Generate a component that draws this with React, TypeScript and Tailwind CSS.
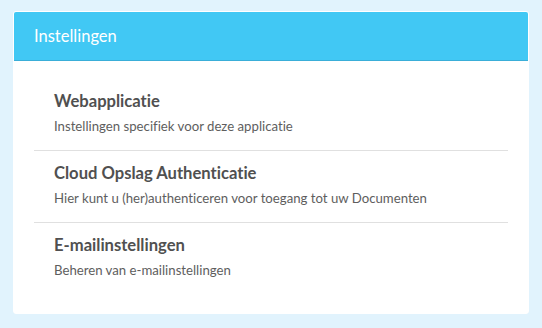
const items = [
  { title: 'Webapplicatie', desc: 'Instellingen specifiek voor deze applicatie' },
  { title: 'Cloud Opslag Authenticatie', desc: 'Hier kunt u (her)authenticeren voor toegang tot uw Documenten' },
  { title: 'E-mailinstellingen', desc: 'Beheren van e-mailinstellingen' },
];

export default function App() {
  return (
    <div className="w-[542px] h-[328px] bg-[#e1f3fd] pt-[11px] pl-[13px] font-['Lato',sans-serif] [font-variant-ligatures:none]">
      <div className="w-[516px] h-[303px] bg-white rounded-[3px] border border-white overflow-hidden">
        <div className="h-[49px] bg-[#41c8f4] border-b border-[#3aaed8] px-[20px] flex items-center text-white text-[16.5px]">
          Instellingen
        </div>
        <div className="px-[20px] pt-[18px]">
          {items.map((it, i) => (
            <div
              key={it.title}
              className={'h-[72px] px-[20px] pt-[12px] ' + (i < items.length - 1 ? 'border-b border-[#e0e0e0]' : '')}
            >
              <div className="text-[16.6px] leading-[20px] font-bold text-[#505050]">{it.title}</div>
              <div className="mt-[6px] text-[13.2px] leading-[18px] text-[#5e5e5e]">{it.desc}</div>
            </div>
          ))}
        </div>
      </div>
    </div>
  );
}
